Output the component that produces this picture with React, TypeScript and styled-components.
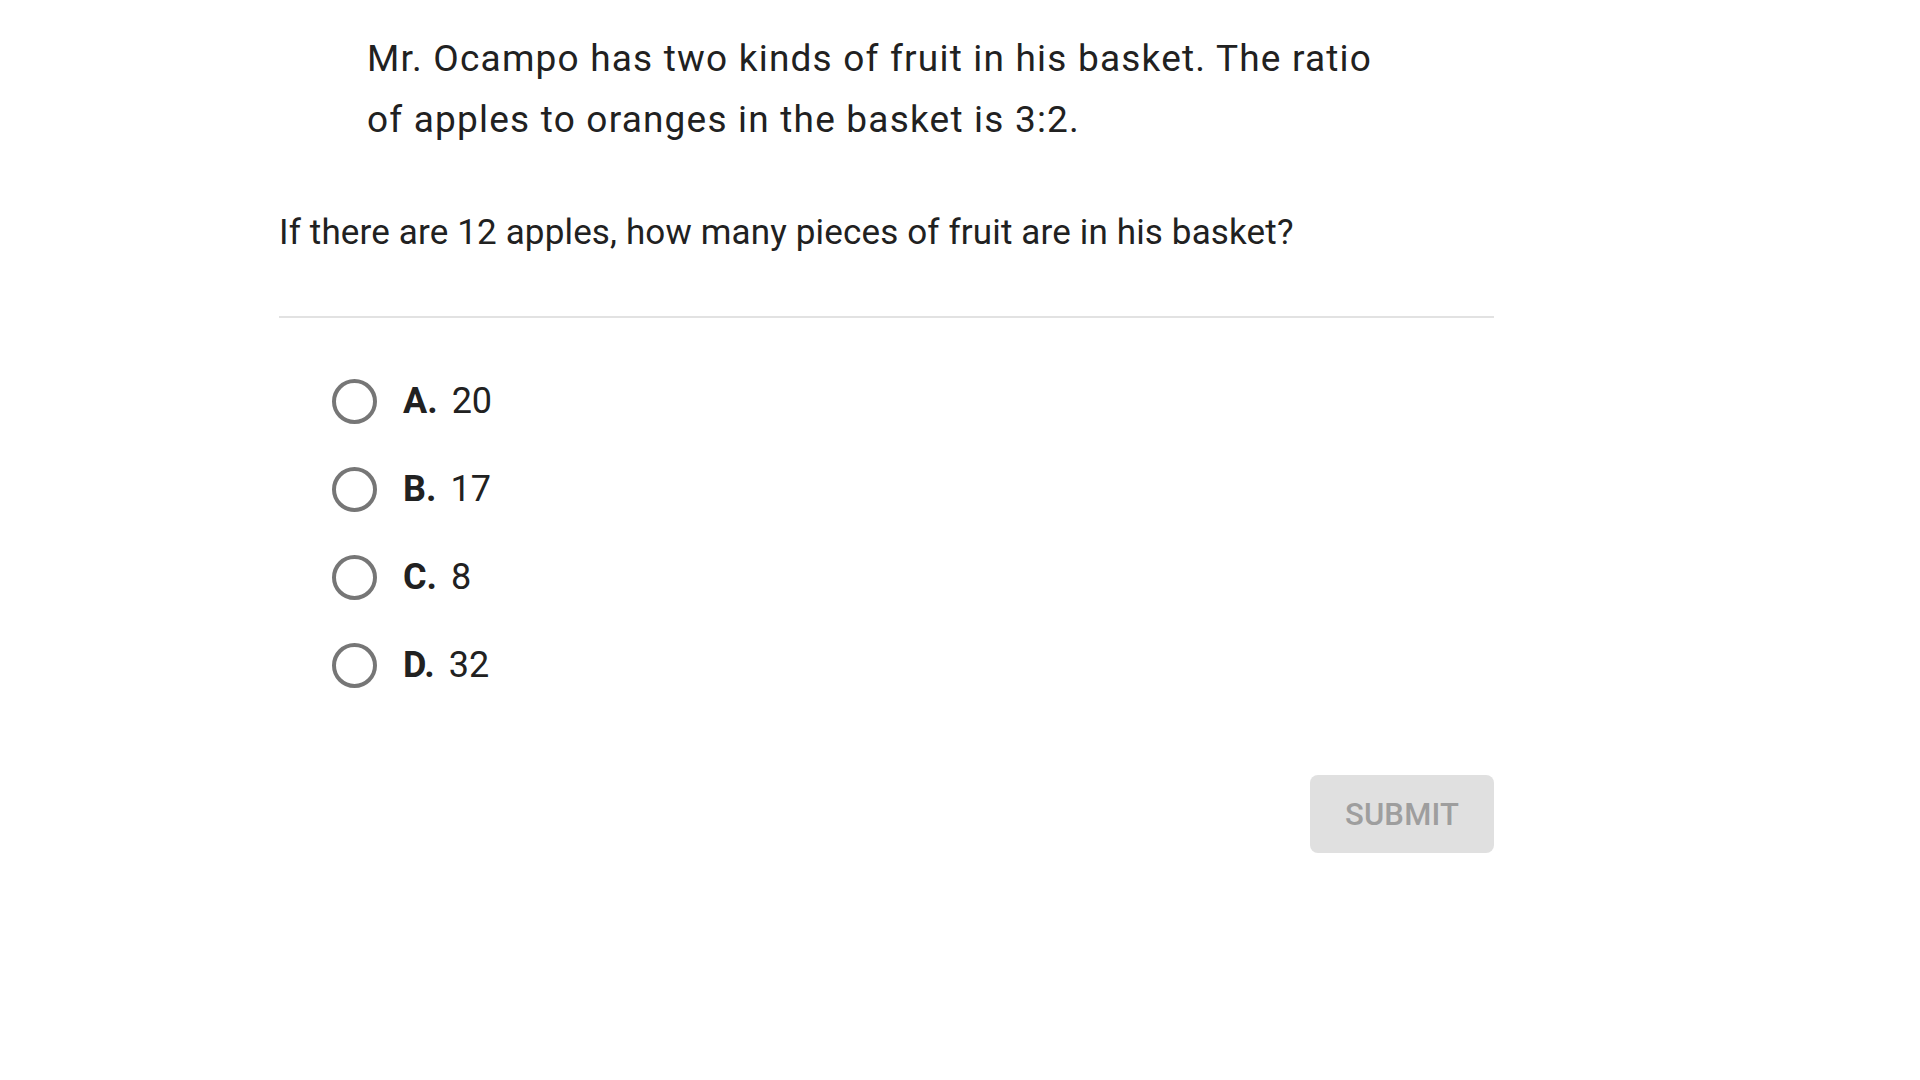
import React, { FunctionComponent } from 'react';
import styled, { createGlobalStyle } from 'styled-components';

const GlobalStyle = createGlobalStyle`
  body {
    margin: 0;
    background: #ffffff;
    font-family: Roboto, "Liberation Sans", Arial, sans-serif;
    color: #212121;
  }
`;

const Page = styled.div`
  width: 1215px;
  margin-left: 279px;
  padding-top: 28px;
`;

const Passage = styled.p`
  margin: 0 0 0 88px;
  width: 1030px;
  font-size: 37px;
  line-height: 61px;
  letter-spacing: 1.2px;
`;

const Question = styled.p`
  margin: 59px 0 0 0;
  font-size: 35px;
  line-height: 48px;
  letter-spacing: 0.15px;
`;

const Divider = styled.hr`
  margin: 59px 0 0 0;
  border: none;
  height: 2px;
  background: #e2e2e2;
`;

const Options = styled.ul`
  list-style: none;
  margin: 39px 0 0 0;
  padding: 0 0 0 53px;
`;

const Option = styled.li`
  display: flex;
  align-items: center;
  height: 88px;
  cursor: pointer;
`;

const Radio = styled.span`
  box-sizing: border-box;
  width: 45px;
  height: 45px;
  border-radius: 50%;
  border: 4px solid #767676;
  margin-right: 26px;
`;

const Letter = styled.span`
  font-weight: 700;
  font-size: 36px;
  margin-right: 14px;
`;

const Answer = styled.span`
  font-size: 36px;
`;

const Footer = styled.div`
  display: flex;
  justify-content: flex-end;
  margin-top: 66px;
`;

const SubmitButton = styled.button`
  width: 184px;
  height: 78px;
  border: none;
  border-radius: 8px;
  background: #e0e0e0;
  color: #9e9e9e;
  font-family: Roboto, "Liberation Sans", Arial, sans-serif;
  font-size: 31px;
  font-weight: 500;
  letter-spacing: 0.2px;
`;

interface Choice {
  letter: string;
  value: string;
}

const choices: Choice[] = [
  { letter: 'A.', value: '20' },
  { letter: 'B.', value: '17' },
  { letter: 'C.', value: '8' },
  { letter: 'D.', value: '32' },
];

const App: FunctionComponent = () => {
  return (
    <>
      <GlobalStyle />
      <Page>
        <Passage>
          Mr. Ocampo has two kinds of fruit in his basket. The ratio of apples to oranges in the basket is 3:2.
        </Passage>
        <Question>If there are 12 apples, how many pieces of fruit are in his basket?</Question>
        <Divider />
        <Options>
          {choices.map((c) => (
            <Option key={c.letter}>
              <Radio />
              <Letter>{c.letter}</Letter>
              <Answer>{c.value}</Answer>
            </Option>
          ))}
        </Options>
        <Footer>
          <SubmitButton disabled>SUBMIT</SubmitButton>
        </Footer>
      </Page>
    </>
  );
};

export default App;
